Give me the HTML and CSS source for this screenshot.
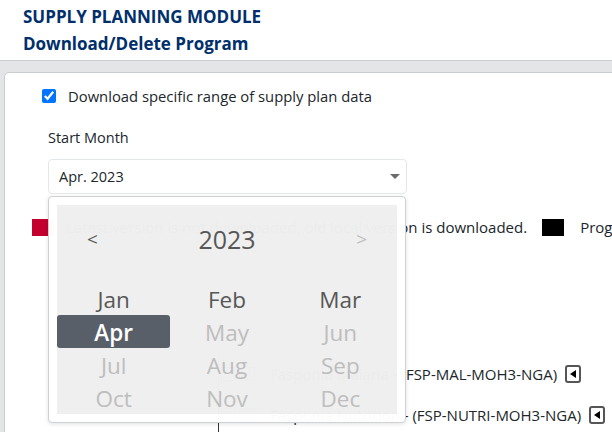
FILE: index.html
```html
<!DOCTYPE html>
<html lang="en">
<head>
    <meta charset="UTF-8">
    <title>Download/Delete Program</title>
    <link rel="stylesheet" href="styles.css">
</head>
<body>

    <header class="page-head">
        <h1>SUPPLY PLANNING MODULE</h1>
        <h2>Download/Delete Program</h2>
    </header>

    <main class="page-body">
        <section class="card">

            <label class="check-row">
                <input type="checkbox" checked>
                <span>Download specific range of supply plan data</span>
            </label>

            <div class="field">
                <div class="field-label">Start Month</div>
                <div class="picker">
                    <div class="select">
                        <span>Apr. 2023</span>
                        <span class="caret"></span>
                    </div>

                    <div class="month-popup">
                        <div class="month-panel">
                            <div class="year-bar">
                                <span class="year-nav">&lt;</span>
                                <span class="year">2023</span>
                                <span class="year-nav disabled">&gt;</span>
                            </div>
                            <div class="month-grid">
                                <span class="month">Jan</span>
                                <span class="month">Feb</span>
                                <span class="month">Mar</span>
                                <span class="month selected">Apr</span>
                                <span class="month disabled">May</span>
                                <span class="month disabled">Jun</span>
                                <span class="month disabled">Jul</span>
                                <span class="month disabled">Aug</span>
                                <span class="month disabled">Sep</span>
                                <span class="month disabled">Oct</span>
                                <span class="month disabled">Nov</span>
                                <span class="month disabled">Dec</span>
                            </div>
                        </div>
                    </div>
                </div>
            </div>

            <div class="legend">
                <span class="swatch red"></span>
                <span>Latest version is not downloaded, old local version is downloaded.</span>
                <span class="swatch black"></span>
                <span>Program is up to date</span>
            </div>

            <ul class="tree">
                <li class="tree-row">
                    <span class="toggle"></span>
                    <span class="box"></span>
                    <span class="tree-text">Fasponia Malaria - (FSP-MAL-MOH3-NGA)</span>
                    <span class="row-btn"></span>
                </li>
                <li class="tree-row">
                    <span class="toggle"></span>
                    <span class="box"></span>
                    <span class="tree-text">Fasponia Nutrition - (FSP-NUTRI-MOH3-NGA)</span>
                    <span class="row-btn"></span>
                </li>
                <li class="tree-row">
                    <span class="toggle"></span>
                    <span class="box blue"></span>
                </li>
            </ul>

        </section>
    </main>

</body>
</html>
```

FILE: styles.css
```css
body {
    margin: 0;
    width: 612px;
    height: 432px;
    overflow: hidden;
    background-color: #e4e5e6;
    font-family: "Open Sans", "Noto Sans", sans-serif;
    color: #20262b;
}

.page-head {
    background-color: #fff;
    height: 54px;
    padding: 6px 23px 0;
    border-bottom: 1px solid #c8ced3;
}

.page-head h1,
.page-head h2 {
    margin: 0;
    font-size: 17px;
    font-weight: 700;
    line-height: 21px;
    color: #002f6c;
}

.page-head h2 {
    margin-top: 6px;
}

.page-body {
    padding: 11px 0 0 4px;
}

.card {
    width: 760px;
    height: 420px;
    background-color: #fff;
    border: 1px solid #c8ced3;
    border-radius: 5px;
    padding-top: 12px;
}

.check-row {
    display: flex;
    align-items: center;
    height: 22px;
    padding-left: 37px;
    font-size: 14.8px;
}

.check-row input {
    width: 14px;
    height: 14px;
    margin: 0 12px 0 0;
}

.field {
    margin-top: 20px;
    padding-left: 43px;
    font-size: 14.5px;
}

.field-label {
    line-height: 22px;
    margin-bottom: 10px;
}

.picker {
    position: relative;
    width: 359px;
}

.select {
    box-sizing: border-box;
    height: 35px;
    display: flex;
    align-items: center;
    justify-content: space-between;
    padding: 0 6px 0 10px;
    border: 1px solid #e4e7ea;
    border-radius: 4px;
}

.caret {
    width: 0;
    height: 0;
    border-left: 5px solid transparent;
    border-right: 5px solid transparent;
    border-top: 5px solid #6b6b6b;
}

.month-popup {
    position: absolute;
    left: 0;
    top: 37px;
    z-index: 10;
    padding: 8px;
    background-color: #fff;
    border: 1px solid #cfd2d5;
    border-radius: 4px;
    box-shadow: 0 1px 4px rgba(0, 0, 0, 0.12);
    opacity: 0.985;
}

.month-panel {
    width: 340px;
    height: 209px;
    background-color: #efefef;
    color: #555;
}

.year-bar {
    display: flex;
    align-items: center;
    justify-content: space-between;
    height: 77px;
    padding: 0 30px 10px;
    box-sizing: border-box;
}

.year {
    font-size: 25px;
}

.year-nav {
    font-size: 19px;
}

.year-nav.disabled {
    color: #bbb;
}

.month-grid {
    display: grid;
    grid-template-columns: repeat(3, 1fr);
    grid-auto-rows: 33px;
}

.month {
    display: flex;
    align-items: center;
    justify-content: center;
    padding-top: 2px;
    font-size: 22.5px;
    border-radius: 3px;
}

.month.selected {
    background-color: #575d66;
    color: #fff;
    font-weight: 600;
}

.month.disabled {
    color: #bdbdbd;
}

.legend {
    display: flex;
    align-items: center;
    white-space: nowrap;
    margin-top: 23px;
    padding-left: 27px;
    font-size: 15px;
}

.swatch {
    width: 22px;
    height: 17px;
    flex: none;
}

.swatch.red {
    background-color: #c4002f;
    margin-right: 12px;
}

.swatch.black {
    background-color: #000;
    margin: 0 16px 0 15px;
}

.tree {
    list-style: none;
    margin: 116px 0 0 213px;
    padding: 0;
    border-left: 1px solid #333;
    font-size: 15px;
}

.tree-row {
    display: flex;
    align-items: center;
    height: 41px;
}

.toggle {
    width: 12px;
    height: 12px;
    border: 1px solid #999;
    margin-left: 2px;
}

.box {
    width: 12px;
    height: 12px;
    border: 1px solid #999;
    margin: 0 15px 0 6px;
}

.box.blue {
    border-color: #2196f3;
}

.row-btn {
    position: relative;
    box-sizing: border-box;
    width: 16px;
    height: 18px;
    margin-left: 8px;
    border: 2px solid #555;
    border-radius: 3px;
}

.row-btn::after {
    content: "";
    position: absolute;
    left: 3px;
    top: 3px;
    border-top: 4px solid transparent;
    border-bottom: 4px solid transparent;
    border-right: 6px solid #000;
}
```
